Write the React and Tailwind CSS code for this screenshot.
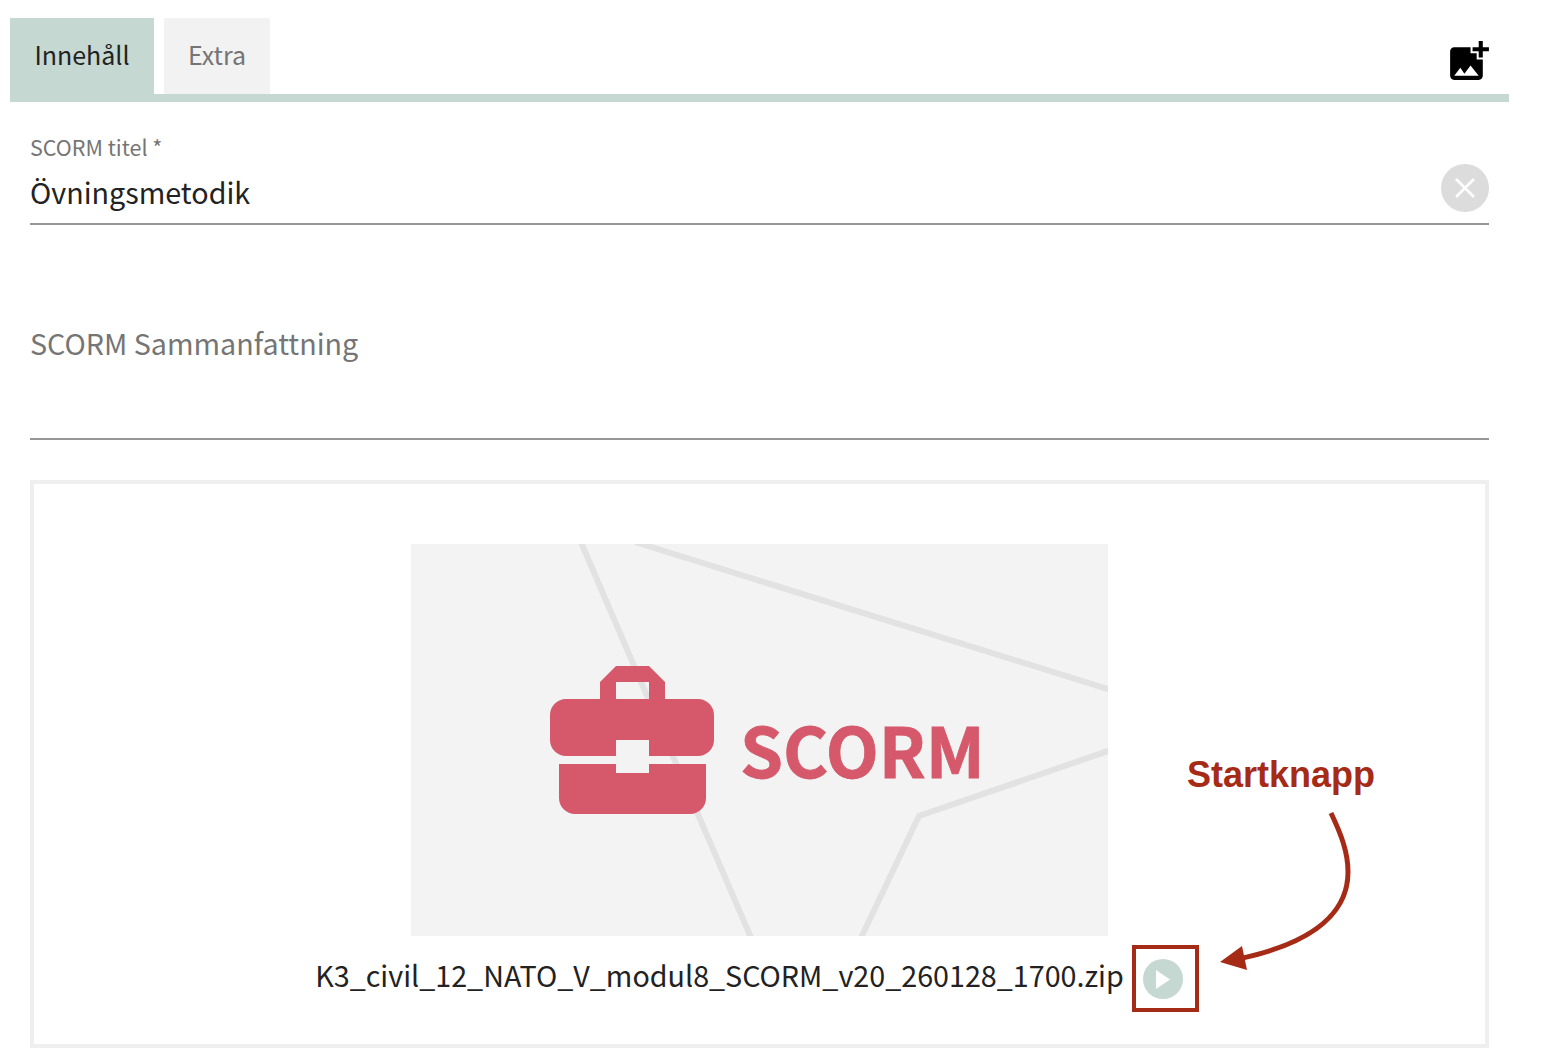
import React from 'react';

const font = { fontFamily: '"Noto Sans CJK SC", "Noto Sans", sans-serif' };

const AddPhotoIcon = () => (
  <svg viewBox="0 0 24 24" className="h-[49px] w-[49px]" fill="#000">
    <path d="M19 7v2.99s-1.99.01-2 0V7h-3s.01-1.99 0-2h3V2h2v3h3v2h-3zm-3 4V8h-3V5H5c-1.1 0-2 .9-2 2v12c0 1.1.9 2 2 2h12c1.1 0 2-.9 2-2v-8h-3zM5 19l3-4 2 3 3-4 4 5H5z" />
  </svg>
);

const ScormImage = () => (
  <svg viewBox="0 0 697 392" className="block h-[392px] w-[697px] bg-[#f3f3f3]">
    <g fill="none" stroke="#e2e2e2" strokeWidth="6">
      <path d="M169 -4 L341 396" />
      <path d="M224 -2 L700 146" />
      <path d="M700 206 L508 272 L449 396" />
    </g>
    <g fill="#d5596b" fillRule="evenodd">
      <path d="M189 138 L205 122 H238 L254 138 V155 H238 V138 H205 V155 H189 Z" />
      <path d="M155 155 H287 A16 16 0 0 1 303 171 V196 A16 16 0 0 1 287 212 H238 V196 H205 V212 H155 A16 16 0 0 1 139 196 V171 A16 16 0 0 1 155 155 Z" />
      <path d="M148 220 H205 V229 H238 V220 H295 V254 A16 16 0 0 1 279 270 H164 A16 16 0 0 1 148 254 Z" />
    </g>
    <text x="329" y="234" fill="#d5596b" stroke="#d5596b" strokeWidth="0.8" fontSize="69" fontWeight="700" style={font}>SCORM</text>
  </svg>
);

const App = () => {
  return (
    <div className="relative h-[1060px] w-[1542px] overflow-hidden bg-white pt-[18px]" style={font}>
      {/* tabs */}
      <div className="ml-[10px] flex h-[84px] w-[1499px] items-start justify-between border-b-8 border-[#c5d8d2]">
        <div className="flex h-full gap-[10px]">
          <div className="flex h-full w-[144px] items-center justify-center bg-[#c5d8d2] pb-[2px] text-[25px] text-[#222]">
            Innehåll
          </div>
          <div className="flex h-full w-[106px] items-center justify-center bg-[#f2f2f2] pb-[2px] text-[25px] text-[#757575]">
            Extra
          </div>
        </div>
        <div className="mr-4 mt-[19px]">
          <AddPhotoIcon />
        </div>
      </div>

      <div className="px-[30px]">
        {/* title field */}
        <div className="flex h-[123px] w-[1459px] items-end justify-between border-b-2 border-[#969696] pb-2">
          <div>
            <div className="text-[21.5px] leading-[30px] text-[#757575]">SCORM titel *</div>
            <div className="mt-[7px] text-[28.7px] leading-[46px] text-[#222]">Övningsmetodik</div>
          </div>
          <div className="mb-[3px] flex h-12 w-12 items-center justify-center rounded-full bg-[#dcdcdc]">
            <svg viewBox="0 0 20 20" className="h-5 w-5" stroke="#fff" strokeWidth="2.6" fill="none">
              <path d="M1 1 L19 19 M19 1 L1 19" />
            </svg>
          </div>
        </div>

        {/* summary field */}
        <div className="flex h-[215px] w-[1459px] flex-col border-b-2 border-[#969696] pt-[95px]">
          <div className="text-[28.7px] leading-[46px] text-[#757575]">SCORM Sammanfattning</div>
        </div>

        {/* package preview */}
        <div className="mt-10 flex h-[568px] w-[1459px] flex-col items-center border-4 border-[#efefef] pt-[60px]">
          <ScormImage />
          <div className="mt-[15px] flex items-center">
            <span className="text-[28.7px] leading-[44px] text-[#222]">K3_civil_12_NATO_V_modul8_SCORM_v20_260128_1700.zip</span>
            <div className="ml-[19px] mr-[21px] mt-2 flex h-10 w-10 items-center justify-center rounded-full bg-[#c5d8d2]">
              <svg viewBox="0 0 14 19" className="ml-[1px] h-[19px] w-[14px]" fill="#fff">
                <path d="M0 0 L14 9.5 L0 19 Z" />
              </svg>
            </div>
          </div>
        </div>
      </div>

      {/* annotation */}
      <div className="absolute left-[1132px] top-[945px] h-[67px] w-[67px] border-[4px] border-[#a62b17]" />
      <div
        className="absolute left-[1187px] top-[753px] text-[36px] font-bold leading-[44px] text-[#a62b17]"
        style={{ fontFamily: '"Liberation Sans", Arial, sans-serif' }}
      >
        Startknapp
      </div>
      <svg className="absolute left-[1200px] top-[800px] h-[180px] w-[170px]" viewBox="0 0 170 180" fill="none">
        <path d="M131 13 C141 34 148 52 148 72 C148 120 100 146 38 159" stroke="#a62b17" strokeWidth="5" />
        <path d="M20 162 L42 146 L47 170 Z" fill="#a62b17" />
      </svg>
    </div>
  );
};

export default App;
